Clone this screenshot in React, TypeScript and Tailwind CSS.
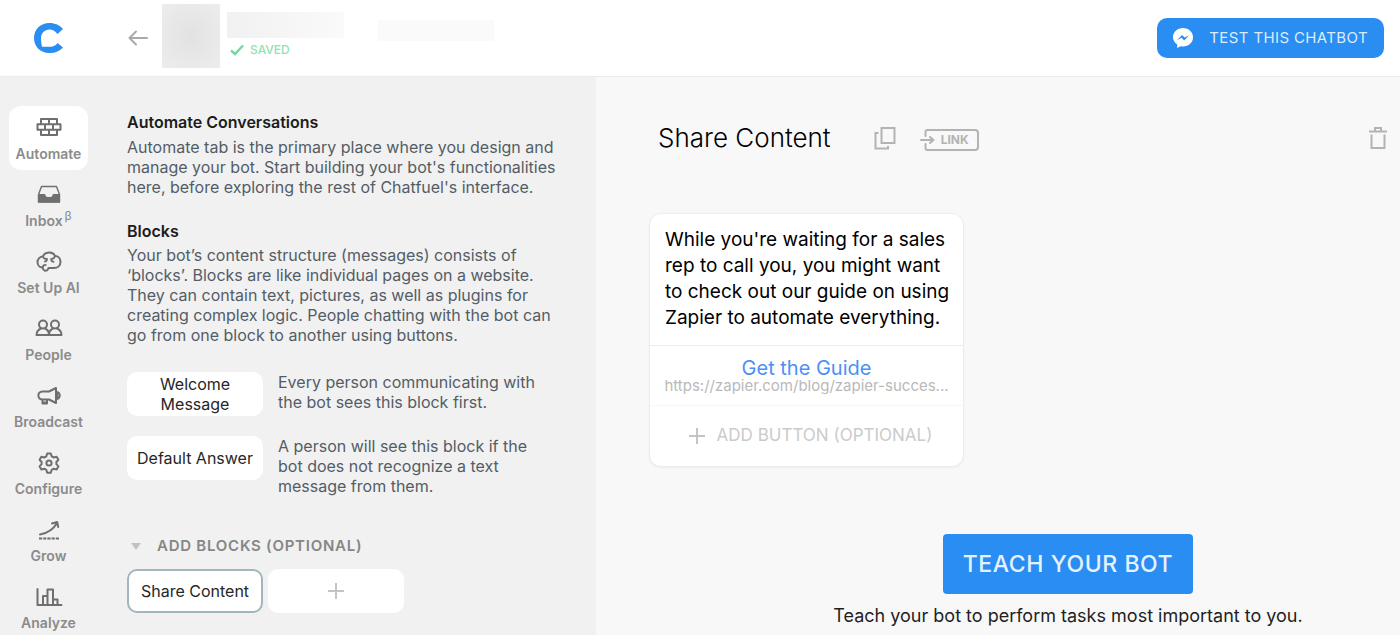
import type { ReactNode } from "react";

type NavItem = { label: string; icon: ReactNode; sup?: string };

const stroke = {
  fill: "none",
  stroke: "currentColor",
  strokeWidth: 2,
  strokeLinejoin: "round" as const,
  strokeLinecap: "round" as const,
};

function NavSvg({ children }: { children: ReactNode }) {
  return (
    <svg width="28" height="24" viewBox="0 0 28 24" aria-hidden="true" {...stroke}>
      {children}
    </svg>
  );
}

const NAV: NavItem[] = [
  {
    label: "Automate",
    icon: (
      <NavSvg>
        <path d="M6 4h16v5.300H6zM2.500 9.300h23v5.400h-23zM6 14.700h16V20H6zM14 4v5.300M10 9.300v5.400M18 9.300v5.400M14 14.700V20" />
      </NavSvg>
    ),
  },
  {
    label: "Inbox",
    sup: "β",
    icon: (
      <NavSvg>
        <path strokeWidth="1.4" d="M3.500 12.500 6.500 4.500h15l3 8v7.500h-21z" />
        <path fill="currentColor" stroke="none" d="M3 12h6.500c.6 0 .8.5 1 1.300.3 1.300 1 1.700 2 1.700h3c1 0 1.700-.4 2-1.700.2-.8.4-1.300 1-1.300H25v8.500H3z" />
      </NavSvg>
    ),
  },
  {
    label: "Set Up AI",
    icon: (
      <NavSvg>
        <path d="M8 7.500C9.500 2.500 18 2 20 7c3.300 0 5.500 2.500 5.500 5.700 0 4-2.800 6.300-6.500 6.300h-5.500c-.5 1.800-2 3.200-3.500 2.700-1.500-.4-2.300-1.600-2.500-3.200C4.500 18.500 2.500 16 2.500 13c0-3 2.500-5.500 5.500-5.500z" />
        <path strokeWidth="1.800" d="M8 7.500c.6 1.800 2 2.700 4 2.400M12 9.900c0 1.500-.6 2.300-2 2.600M20 7c-.5 1.900-1.800 3-3.800 2.900M16.200 9.900c-.2 1.600.6 2.600 2.300 2.900M7.500 18.500c.3-1.500 1.500-2.600 3.200-2.600" />
      </NavSvg>
    ),
  },
  {
    label: "People",
    icon: (
      <NavSvg>
        <circle cx="8" cy="8.500" r="4" />
        <circle cx="20" cy="8.500" r="4" />
        <path d="M6 12.500c-3 1.200-4.500 3.300-4.500 6.500h12.500c0-3.200-1.200-5.300-4-6.500M18 12.500c-2.800 1.200-4 3.300-4 6.500h12.500c0-3.200-1.500-5.300-4.500-6.500" />
      </NavSvg>
    ),
  },
  {
    label: "Broadcast",
    icon: (
      <NavSvg>
        <path d="M14 8.500H7.500C2 8.500 2 16.500 7.500 16.500H14l7 3.500V5zM7.500 17v3.500h4.500V17M21 9c5-.3 5 7.300 0 7" />
        <path d="M8.500 19.500h2.500M22.500 10v5" />
      </NavSvg>
    ),
  },
  {
    label: "Configure",
    icon: (
      <NavSvg>
        <path d="M12.200 3.500h3.600l.9 2.900 2 1.100 2.900-.8 1.800 3.100-2 2.200v2.200l2 2.200-1.800 3.100-2.900-.8-2 1.100-.9 2.900h-3.600l-.9-2.900-2-1.100-2.900.8-1.800-3.100 2-2.200v-2.200l-2-2.200 1.800-3.100 2.900.8 2-1.100z" />
        <circle cx="14" cy="13" r="2.600" />
      </NavSvg>
    ),
  },
  {
    label: "Grow",
    icon: (
      <NavSvg>
        <path d="M5 17.500c8-1.500 13-4.500 17-11.500M17 6.500l5.200-1.500 1 5" />
        <path strokeLinecap="butt" strokeDasharray="3.200 1" d="M4 21.500h20.500" />
      </NavSvg>
    ),
  },
  {
    label: "Analyze",
    icon: (
      <NavSvg>
        <path d="M2.500 5v16h24M8 21v-9h4.500M12.500 21V5.500h5.500V21M18 15.500h4.500V21" />
      </NavSvg>
    ),
  },
];

function Sidebar() {
  return (
    <nav className="w-[97px] shrink-0 px-[9px] pt-[29px] flex flex-col gap-[3px]">
      {NAV.map((item, i) => (
        <a
          key={item.label}
          href="#"
          className={`h-16 shrink-0 rounded-xl flex flex-col items-center pt-[9px] text-[#6f6f6f] ${i === 0 ? "bg-white" : ""}`}
        >
          {item.icon}
          <span className="mt-1 text-sm leading-[22px] font-semibold text-[#8b8b8b] whitespace-nowrap">
            {item.label}
            {item.sup && <sup className="ml-0.5 text-xs font-normal">{item.sup}</sup>}
          </span>
        </a>
      ))}
    </nav>
  );
}

function Header() {
  return (
    <header className="h-[77px] shrink-0 bg-white border-b border-[#ececec] flex items-center pr-4">
      <a href="#" aria-label="Home" className="w-[97px] shrink-0 flex justify-center">
        <svg width="30" height="30" viewBox="0 0 30 30" aria-hidden="true">
          <path fill="#2a8df1" d="M29 6 23.500 11C21.600 8.500 18.800 6.500 15.500 6.500 10.500 6.500 7 10.300 7 15c0 3.400.6 6.300 1 8.700h9.500c2.500-.2 4.600-1.500 6-3.700L29 24.500C26 28 21.700 30 16 30H15C6.500 30 0 23.500 0 15S6.500 0 15.300 0C21 0 26 2.300 29 6z" />
        </svg>
      </a>
      <button type="button" aria-label="Back" className="ml-[31px] text-[#a9a9a9]">
        <svg width="20" height="16" viewBox="0 0 20 16" aria-hidden="true" {...stroke}>
          <path d="M19 8H1.500M8 1.500 1.500 8 8 14.500" />
        </svg>
      </button>
      <div className="ml-[14px] mb-1 w-[58px] h-16 bg-radial from-[#e2e2e2] to-[#ededed]" />
      <div className="ml-[7px] w-[117px] self-start pt-3">
        <div className="h-[26px] bg-linear-to-r from-[#f1f1f1] to-[#fafafa]" />
        <div className="mt-[3px] ml-[3px] flex items-center gap-[6px] text-[#8fe3b4]">
          <svg width="14" height="12" viewBox="0 0 14 12" aria-hidden="true" fill="none" stroke="#72d9a0" strokeWidth="2.400">
            <path d="M1 6.500 5 10l8-8.500" />
          </svg>
          <span className="text-xs leading-[18px] font-medium">SAVED</span>
        </div>
      </div>
      <div className="ml-[34px] mb-4 w-[116px] h-[21px] bg-[#fafafa]" />
      <button
        type="button"
        className="ml-auto h-10 px-4 rounded-[10px] bg-[#2a8df1] text-[#dcecfd] text-[15px] tracking-wide flex items-center gap-4"
      >
        <svg width="20" height="20" viewBox="0 0 20 20" aria-hidden="true">
          <path fill="#fff" d="M10 0C4.300 0 0 4 0 9.200c0 2.900 1.500 5.500 4.200 7.300V20l3.300-1.800c.8.200 1.600.3 2.500.3 5.700 0 10-4.100 10-9.300S15.700 0 10 0z" />
          <path fill="#2a8df1" d="M4 12.300 9 7l2.600 2.600L16 7.200 11.200 12.400 8.600 9.800z" />
        </svg>
        TEST THIS CHATBOT
      </button>
    </header>
  );
}

function BlockButton({ children, active, label }: { children: ReactNode; active?: boolean; label?: string }) {
  return (
    <button
      type="button"
      aria-label={label}
      className={`w-[136px] h-11 shrink-0 rounded-[10px] bg-white text-[#262626] flex items-center justify-center text-center px-2 ${
        active ? "border-2 border-[#a3b5bd]" : ""
      }`}
    >
      {children}
    </button>
  );
}

function BlocksPanel() {
  return (
    <section className="flex-1 pl-[30px] pr-9 pt-[35px] text-base leading-5 text-[#535d66]">
      <h2 className="font-semibold text-[#1c1c1c]">Automate Conversations</h2>
      <p className="mt-[5px]">
        Automate tab is the primary place where you design and manage your bot. Start building your bot's
        functionalities here, before exploring the rest of Chatfuel's interface.
      </p>
      <h2 className="mt-6 font-semibold text-[#1c1c1c]">Blocks</h2>
      <p className="mt-1">
        Your bot’s content structure (messages) consists of ‘blocks’. Blocks are like individual pages on a website.
        They can contain text, pictures, as well as plugins for creating complex logic. People chatting with the bot can
        go from one block to another using buttons.
      </p>

      <div className="mt-[27px] flex gap-[15px]">
        <BlockButton>
          Welcome
          <br />
          Message
        </BlockButton>
        <p className="w-[264px]">Every person communicating with the bot sees this block first.</p>
      </div>
      <div className="mt-5 flex gap-[15px]">
        <BlockButton>Default Answer</BlockButton>
        <p className="w-[264px]">A person will see this block if the bot does not recognize a text message from them.</p>
      </div>

      <button
        type="button"
        className="mt-10 ml-1 flex items-center gap-4 text-[15px] leading-5 font-semibold tracking-wider text-[#868686]"
      >
        <svg width="10" height="7" viewBox="0 0 10 7" aria-hidden="true">
          <path fill="#c2c2c2" d="M0 0h10L5 7z" />
        </svg>
        ADD BLOCKS (OPTIONAL)
      </button>
      <div className="mt-[13px] flex gap-[5px]">
        <BlockButton active>Share Content</BlockButton>
        <BlockButton label="Add block">
          <svg width="16" height="16" viewBox="0 0 16 16" aria-hidden="true" fill="none" stroke="#c4c4c4" strokeWidth="2">
            <path d="M8 0v16M0 8h16" />
          </svg>
        </BlockButton>
      </div>
    </section>
  );
}

function MessageCard() {
  return (
    <article className="w-[315px] rounded-xl bg-white border border-[#ededed] shadow-xs">
      <p className="pl-[15px] pr-2 pt-[13px] pb-[14px] text-[19px] leading-[26px] text-black">
        While you're waiting for a sales rep to call you, you might want to check out our guide on using Zapier to
        automate everything.
      </p>
      <div className="h-[60px] border-t border-[#ececec] px-2 pt-3 text-center">
        <a href="#" className="block text-xl leading-5 text-[#4a90f5]">
          Get the Guide
        </a>
        <div className="text-[15px] leading-4 text-[#b9b9b9] whitespace-nowrap">https://zapier.com/blog/zapier-succes...</div>
      </div>
      <button
        type="button"
        className="w-full h-[61px] pl-2 border-t border-[#f7f7f7] flex items-center justify-center gap-3 text-[17px] text-[#cbcbcb]"
      >
        <svg width="16" height="16" viewBox="0 0 16 16" aria-hidden="true" fill="none" stroke="#c4c4c4" strokeWidth="2">
          <path d="M8 0v16M0 8h16" />
        </svg>
        ADD BUTTON (OPTIONAL)
      </button>
    </article>
  );
}

function Editor() {
  return (
    <main className="flex-1 min-w-0 bg-[#f8f8f8] pl-[53px] pt-[41px]">
      <div className="h-10 pl-[9px] pr-[13px] flex items-center text-[#b3b3b3]">
        <h1 className="text-[26px] leading-10 font-light text-black whitespace-nowrap">Share Content</h1>
        <button type="button" aria-label="Copy block" className="ml-[43px]">
          <svg width="22" height="24" viewBox="0 0 22 24" aria-hidden="true" fill="none" stroke="currentColor" strokeWidth="2">
            <path d="M7.500 2H20.500v15H7.500zM4.500 7H1.500v15.500H14V20" />
          </svg>
        </button>
        <button type="button" className="ml-6 mt-1 flex items-center">
          <svg width="16" height="22" viewBox="0 0 16 22" aria-hidden="true" {...stroke}>
            <path d="M16 1H7.500Q5.500 1 5.500 3V7M5.500 15v4q0 2 2 2H16M1 11h12M10 8l3.500 3L10 14" />
          </svg>
          <span className="h-[22px] pl-[5px] pr-2 border-2 border-l-0 border-current rounded-r-[4px] text-xs leading-[18px] font-bold">
            LINK
          </span>
        </button>
        <button type="button" aria-label="Delete block" className="ml-auto">
          <svg width="18" height="24" viewBox="0 0 18 24" aria-hidden="true" fill="none" stroke="currentColor" strokeWidth="2">
            <path d="M0 5.500h18M6 5.500V2h6v3.500M2.500 8.500V22h13V8.500" />
          </svg>
        </button>
      </div>

      <div className="mt-[55px]">
        <MessageCard />
      </div>

      <div className="mt-[67px] pl-[87px] flex flex-col items-center">
        <button type="button" className="h-[60px] px-5 rounded bg-[#2a8df1] text-[#e6f1fe] text-[23px] tracking-wide font-medium">
          TEACH YOUR BOT
        </button>
        <p className="mt-[9px] text-lg leading-[26px] text-[#1f1f1f]">Teach your bot to perform tasks most important to you.</p>
      </div>
    </main>
  );
}

export default function App() {
  return (
    <div className="h-screen overflow-hidden flex flex-col bg-[#f8f8f8] font-['Inter','Liberation_Sans',sans-serif]">
      <Header />
      <div className="flex-1 min-h-0 flex">
        <div className="w-[596px] shrink-0 flex bg-[#f1f1f1]">
          <Sidebar />
          <BlocksPanel />
        </div>
        <Editor />
      </div>
    </div>
  );
}
